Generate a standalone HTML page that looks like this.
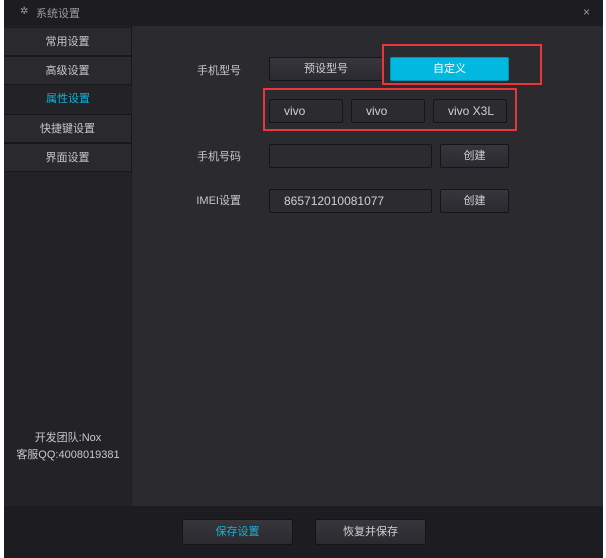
<!DOCTYPE html><html><head><meta charset="utf-8"><style>
*{margin:0;padding:0;box-sizing:border-box}
body{width:606px;height:558px;background:#fff;position:relative;overflow:hidden;font-family:"Liberation Sans","Noto Sans CJK SC",sans-serif;font-size:11px;color:#c8c8cc}
.win{position:absolute;left:4px;top:0;width:599px;height:558px;background:#2a2a2f}
.title{position:absolute;left:0;top:0;width:599px;height:26px;background:#1d1d21;color:#9a9aa0}
.side{position:absolute;left:0;top:26px;width:128px;height:480px;background:#232227;border-right:1px solid #1e1e22}
.it{position:absolute;left:0;width:128px;height:29px;line-height:28px;text-align:center;background:#29292e;border:1px solid #18181b;border-left:none}
.bottom{position:absolute;left:0;top:506px;width:599px;height:52px;background:#1d1d21}
.a{position:absolute}
.lbl{position:absolute;width:80px;text-align:right;color:#c8c8cc}
.btn{position:absolute;height:24px;line-height:22px;text-align:center;background:linear-gradient(#36363c,#2a2a2f);border:1px solid #151518;border-radius:2px;color:#d0d0d4}
.inp{position:absolute;height:24px;line-height:22px;background:#2b2b30;border:1px solid #151518;border-radius:2px;padding-left:14px;color:#d0d0d4;font-size:12px}
.red{position:absolute;border:2px solid #e8363a}
</style></head><body>
<div class="win">
<div class="title"><span class="a" style="left:16px;top:6px;font-size:10px">✲</span><span class="a" style="left:32px;top:5px">系统设置</span><span class="a" style="left:579px;top:5px;font-size:12px">×</span></div>
<div class="side">
<div class="it" style="top:1px">常用设置</div>
<div class="it" style="top:30px">高级设置</div>
<div class="it" style="top:59px;background:none;border:none;color:#10b4dc">属性设置</div>
<div class="it" style="top:88px">快捷键设置</div>
<div class="it" style="top:117px">界面设置</div>
<div class="a" style="left:0;width:128px;top:404px;text-align:center;line-height:17px">开发团队:Nox<br>客服QQ:4008019381</div>
</div>
<div class="lbl" style="left:157px;top:62px">手机型号</div>
<div class="btn" style="left:265px;top:57px;width:114px">预设型号</div>
<div class="btn" style="left:386px;top:57px;width:119px;background:#00b8e0;color:#fff;border-color:#0a90b0">自定义</div>
<div class="red" style="left:378px;top:44px;width:160px;height:41px"></div>
<div class="red" style="left:259px;top:88px;width:254px;height:43px"></div>
<div class="inp" style="left:265px;top:99px;width:74px">vivo</div>
<div class="inp" style="left:347px;top:99px;width:74px">vivo</div>
<div class="inp" style="left:429px;top:99px;width:74px">vivo X3L</div>
<div class="lbl" style="left:157px;top:148px">手机号码</div>
<div class="inp" style="left:265px;top:144px;width:163px"></div>
<div class="btn" style="left:436px;top:144px;width:69px">创建</div>
<div class="lbl" style="left:157px;top:192px">IMEI设置</div>
<div class="inp" style="left:265px;top:189px;width:163px">865712010081077</div>
<div class="btn" style="left:436px;top:189px;width:69px">创建</div>
<div class="bottom">
<div class="btn" style="left:178px;top:13px;width:111px;height:26px;line-height:24px;color:#10b4dc">保存设置</div>
<div class="btn" style="left:311px;top:13px;width:111px;height:26px;line-height:24px">恢复并保存</div>
</div>
</div>
</body></html>
